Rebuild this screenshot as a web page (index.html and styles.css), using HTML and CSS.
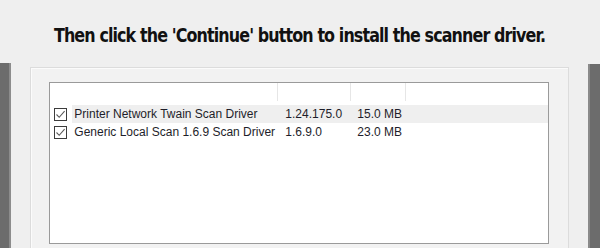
FILE: index.html
```html
<!DOCTYPE html>
<html lang="en">
<head>
  <meta charset="UTF-8">
  <title>Scanner Driver Setup</title>
  <link rel="stylesheet" href="styles.css">
</head>
<body>
  <h1 class="title"><span>Then click the 'Continue' button to install the scanner driver.</span></h1>

  <div class="stage">
    <div class="side-bar left"></div>

    <div class="panel">
      <div class="listbox">
        <div class="list-header">
          <div class="col col-name"></div>
          <div class="col col-version"></div>
          <div class="col col-size"></div>
        </div>

        <div class="list-row">
          <span class="check">
            <svg width="11" height="11" viewBox="0 0 11 11"><path d="M1.5 5.5 L4.2 8.3 L9.6 2.2" fill="none" stroke="#5a5a5a" stroke-width="1.1"/></svg>
          </span>
          <div class="cells selected">
            <span class="cell-name">Printer Network Twain Scan Driver</span>
            <span class="cell-version">1.24.175.0</span>
            <span class="cell-size">15.0 MB</span>
          </div>
        </div>

        <div class="list-row">
          <span class="check">
            <svg width="11" height="11" viewBox="0 0 11 11"><path d="M1.5 5.5 L4.2 8.3 L9.6 2.2" fill="none" stroke="#5a5a5a" stroke-width="1.1"/></svg>
          </span>
          <div class="cells">
            <span class="cell-name">Generic Local Scan 1.6.9 Scan Driver</span>
            <span class="cell-version">1.6.9.0</span>
            <span class="cell-size">23.0 MB</span>
          </div>
        </div>
      </div>
    </div>

    <div class="side-bar right"></div>
  </div>
</body>
</html>
```

FILE: styles.css
```css
body {
  margin: 0;
  width: 600px;
  height: 248px;
  overflow: hidden;
  background-color: #efefef;
  font-family: "Liberation Sans", Arial, sans-serif;
}

/* heading over the window */
.title {
  margin: 0;
  height: 63px;
  padding-top: 23px;
  box-sizing: border-box;
  display: flex;
  justify-content: center;
  font-family: "DejaVu Sans Condensed", sans-serif;
  font-size: 20px;
  font-weight: bold;
  letter-spacing: -1px;
  color: #111;
  line-height: 24px;
  white-space: nowrap;
}

.title span {
  display: inline-block;
  transform: scaleX(0.885);
}

.stage {
  display: flex;
  align-items: flex-start;
}

.side-bar {
  width: 12px;
  height: 185px;
  background-color: #6c6c6c;
}

.side-bar.left {
  border-right: 2px solid #8c8c8c;
  width: 10px;
}

.side-bar.right {
  margin-left: 19px;
  margin-top: 1px;
  width: 11px;
  height: 184px;
  border-left: 2px solid #8a8a8a;
}

.panel {
  margin-left: 19px;
  margin-top: 4px;
  width: 534px;
  height: 167px;
  background-color: #f2f2f2;
  border: 1px solid #dcdcdc;
  border-bottom: none;
  box-shadow: inset 1px 1px 0 #fbfbfb;
  padding: 14px 19px 0 18px;
}

.listbox {
  height: 160px;
  background-color: #fff;
  border: 1px solid #9a9a9a;
  font-size: 12px;
  color: #1e1e2a;
}

.list-header {
  display: flex;
  height: 22px;
}

.list-header .col {
  height: 18px;
  border-right: 1px solid #e6e6e6;
}

.col-name {
  width: 227px;
}

.col-version {
  width: 72px;
}

.col-size {
  width: 54px;
}

.list-row {
  display: flex;
  align-items: center;
  height: 18px;
}

.check {
  display: flex;
  align-items: center;
  justify-content: center;
  width: 11px;
  height: 11px;
  margin-left: 4px;
  margin-right: 5px;
  border: 1px solid #3c3c3c;
  background-color: #fff;
}

.cells {
  flex: 1;
  display: flex;
  align-items: center;
  height: 18px;
  padding-left: 2px;
}

.cells.selected {
  background-color: #efefef;
}

.cell-name {
  width: 204px;
}

.cell-version {
  width: 66px;
  padding-left: 7px;
}

.cell-size {
  padding-left: 6px;
}
```
